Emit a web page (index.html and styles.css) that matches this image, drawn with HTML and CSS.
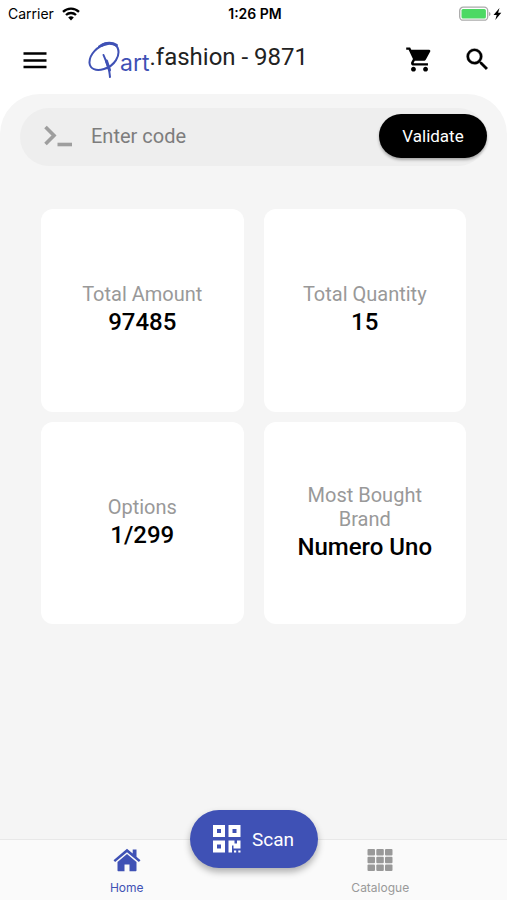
FILE: index.html
```html
<!DOCTYPE html>
<html lang="en">
  <head>
    <meta charset="UTF-8" />
    <meta name="viewport" content="width=device-width, initial-scale=1.0" />
    <title>Qart.fashion</title>
    <link rel="stylesheet" href="styles.css">
  </head>
  <body>
    <div class="status">
      <div class="carrier">
        <span>Carrier</span>
        <svg width="18" height="14" viewBox="0 0 18 14" fill="none" stroke="#000" stroke-width="2.3">
          <path d="M1 4.8a11.5 11.5 0 0 1 16 0" />
          <path d="M4 8a7.2 7.2 0 0 1 10 0" />
          <path d="M9 13.4l-2.8-2.9a4 4 0 0 1 5.6 0z" fill="#000" stroke="none" />
        </svg>
      </div>
      <span class="time">1:26 PM</span>
      <div class="battery">
        <svg width="43" height="16" viewBox="0 0 43 16">
          <rect x="0.7" y="1.2" width="28" height="13" rx="3.5" fill="#fff" stroke="#aaa" stroke-width="1.3" />
          <rect x="2.5" y="3" width="24.400" height="9.400" rx="1.5" fill="#4cd964" />
          <path d="M30 6c2 .6 2 3.400 0 4z" fill="#aaa" />
          <path d="M40.500 2l-6 7h3.200l-1.400 5 6-7.200h-3.200z" fill="#000" />
        </svg>
      </div>
    </div>

    <header class="header">
      <button class="icon-btn" aria-label="Menu">
        <svg width="24" height="24" viewBox="0 0 24 24" stroke="#000" stroke-width="2.600">
          <path d="M0.500 5.500h23M0.500 12.500h23M0.500 19h23" />
        </svg>
      </button>
      <h1 class="title">
        <svg class="mark" width="32" height="38" viewBox="0 0 32 38" fill="none" stroke="#3f51b5" stroke-linecap="round" role="img" aria-label="Q">
          <path d="M11 5.500C17 1 26.500 1 29.500 6.500c3.500 8-3 18.500-13.500 21.500C8 30.500 2 28 1.500 22 1 14 9 4.500 20 3" stroke-width="2" />
          <path d="M14 4.200c4-2.400 10-2.800 14.500 0" stroke-width="2.800" />
          <path d="M15.500 14c2 5 3.800 9 5 13s1 6 1.500 9" stroke-width="2" />
          <path d="M18.500 20l3 9" stroke-width="3" />
        </svg><span class="art">art</span><span class="name">.fashion - 9871</span>
      </h1>
      <div class="actions">
        <button class="icon-btn" aria-label="Cart">
          <svg width="29" height="29" viewBox="0 0 24 24">
            <path d="M7 18c-1.100 0-1.990.9-1.990 2S5.900 22 7 22s2-.9 2-2-.9-2-2-2zM1 2v2h2l3.600 7.590-1.350 2.450c-.16.280-.25.610-.25.960 0 1.100.9 2 2 2h12v-2H7.420c-.14 0-.25-.11-.25-.25l.03-.12.9-1.630h7.450c.75 0 1.410-.41 1.750-1.030l3.580-6.490A1 1 0 0 0 20 4H5.210l-.94-2H1zm16 16c-1.100 0-1.990.9-1.990 2s.89 2 1.990 2 2-.9 2-2-.9-2-2-2z" />
          </svg>
        </button>
        <button class="icon-btn" aria-label="Search">
          <svg width="29" height="29" viewBox="0 0 24 24" stroke="#000" stroke-width="0.300">
            <path d="M15.500 14h-.79l-.28-.27A6.471 6.471 0 0 0 16 9.500 6.500 6.500 0 1 0 9.500 16c1.610 0 3.090-.59 4.230-1.570l.27.280v.79l5 4.990L20.490 19l-4.990-5zm-6 0C7.010 14 5 11.990 5 9.500S7.010 5 9.500 5 14 7.010 14 9.500 11.990 14 9.500 14z" />
          </svg>
        </button>
      </div>
    </header>

    <main class="main">
      <form class="code-form">
        <label for="code" aria-label="Code">
          <svg width="30" height="22" viewBox="0 0 30 22" fill="none" stroke="#9e9e9e" stroke-width="3.600">
            <path d="M2.500 2l8.500 8.500L2.500 19" />
            <path d="M14.500 19.500H29" />
          </svg>
        </label>
        <input type="text" id="code" placeholder="Enter code" />
        <button type="button" class="validate">Validate</button>
      </form>

      <section class="cards">
        <div class="card">
          <h2>Total Amount</h2>
          <p>97485</p>
        </div>
        <div class="card">
          <h2>Total Quantity</h2>
          <p>15</p>
        </div>
        <div class="card">
          <h2>Options</h2>
          <p>1/299</p>
        </div>
        <div class="card">
          <h2>Most Bought Brand</h2>
          <p>Numero Uno</p>
        </div>
      </section>
    </main>

    <nav class="tabs">
      <a href="#" class="tab active">
        <svg width="28" height="24" viewBox="0 0 28 24" fill="#3f51b5">
          <path d="M14 .8L.5 12.200l1.600 1.900L14 4.200l11.900 9.900 1.600-1.900-4-3.400V1.600h-3.800v4z" />
          <path d="M14 6L4.500 14v8.200c0 .6.400 1 1 1h6v-6.600h5v6.600h6c.6 0 1-.4 1-1V14z" />
        </svg>
        <span>Home</span>
      </a>
      <a href="#" class="tab">
        <svg width="26" height="24" viewBox="0 0 26 24" fill="#999">
          <rect x="0.500" y="1" width="7.500" height="6.500" rx="1" />
          <rect x="9.300" y="1" width="7.500" height="6.500" rx="1" />
          <rect x="18" y="1" width="7.500" height="6.500" rx="1" />
          <rect x="0.500" y="8.800" width="7.500" height="6.500" rx="1" />
          <rect x="9.300" y="8.800" width="7.500" height="6.500" rx="1" />
          <rect x="18" y="8.800" width="7.500" height="6.500" rx="1" />
          <rect x="0.500" y="16.500" width="7.500" height="6.500" rx="1" />
          <rect x="9.300" y="16.500" width="7.500" height="6.500" rx="1" />
          <rect x="18" y="16.500" width="7.500" height="6.500" rx="1" />
        </svg>
        <span>Catalogue</span>
      </a>
      <button class="scan">
        <svg width="28" height="28" viewBox="0 0 28 28" fill="#fff">
          <path fill-rule="evenodd" d="M0 0h12v12H0zM4 4v4h4V4zM15.500 0h12v12h-12zM19.500 4v4h4V4zM0 15.500h12v12H0zM4 19.500v4h4v-4z" />
          <path d="M15.500 15.500h6v3h2.500v-3h3.500v8h-7v-3h-1.500v7h-3.500zM21 25.500h2.200v2H21zM25.300 25.500h2.200v2h-2.200z" />
        </svg>
        <span>Scan</span>
      </button>
    </nav>
  </body>
</html>
```
FILE: styles.css
```css
* {
  box-sizing: border-box;
}
body {
  margin: 0;
  min-height: 100vh;
  display: flex;
  flex-direction: column;
  background-color: white;
  color: black;
  font-family: Roboto, "Liberation Sans", sans-serif;
}
button {
  border: none;
  padding: 0;
  background: none;
  font-family: inherit;
  cursor: pointer;
}
svg {
  display: block;
}
.status {
  display: grid;
  grid-template-columns: 1fr auto 1fr;
  align-items: center;
  height: 27px;
  padding: 0 5px 0 8px;
  font-family: Inter, sans-serif;
  font-size: 14px;
}
.carrier {
  display: flex;
  align-items: center;
  gap: 8px;
}
.time {
  font-weight: 600;
}
.battery {
  justify-self: end;
}
.header {
  display: flex;
  align-items: center;
  height: 67px;
  padding: 0 15px 2px 23px;
}
.title {
  display: flex;
  align-items: center;
  flex: 1;
  margin: 0 0 0 41px;
  font-size: 24px;
  font-weight: 400;
  color: #222;
}
.art {
  align-self: flex-end;
  font-family: Inter, sans-serif;
  font-size: 23px;
  line-height: 32px;
  color: #3f51b5;
}
.name {
  padding-bottom: 6px;
}
.actions {
  display: flex;
  gap: 29px;
}
.main {
  flex: 1;
  padding: 14px 20px 20px;
  border-radius: 40px 40px 0 0;
  background-color: #f5f5f5;
}
.code-form {
  display: flex;
  align-items: center;
  height: 58px;
  padding: 0 0 2px 23px;
  border-radius: 29px;
  background-color: #eee;
}
.code-form input {
  flex: 1;
  min-width: 0;
  height: 100%;
  padding: 0 18px;
  border: none;
  outline: none;
  background: none;
  font-family: inherit;
  font-size: 20px;
}
.code-form input::placeholder {
  color: #7d7d7d;
}
.validate {
  width: 108px;
  height: 44px;
  border-radius: 22px;
  background-color: black;
  color: white;
  font-size: 17px;
  box-shadow: 0 2px 3px rgba(0, 0, 0, 0.3);
}
.cards {
  display: grid;
  grid-template-columns: 1fr 1fr;
  gap: 10px 20px;
  padding: 43px 21px 0;
}
.card {
  display: flex;
  flex-direction: column;
  align-items: center;
  justify-content: center;
  aspect-ratio: 1;
  padding: 0 30px;
  border-radius: 12px;
  background-color: white;
  text-align: center;
}
.card h2 {
  margin: 0;
  font-size: 20px;
  line-height: 24px;
  font-weight: 400;
  color: #999;
}
.card p {
  margin: 0;
  font-size: 24px;
  line-height: 32px;
  font-weight: 500;
}
.tabs {
  position: relative;
  display: flex;
  height: 61px;
  border-top: 1px solid #e8e8e8;
  background-color: #fafafa;
}
.tab {
  display: flex;
  flex: 1;
  flex-direction: column;
  align-items: center;
  gap: 8px;
  padding-top: 8px;
  font-family: Inter, sans-serif;
  font-size: 12px;
  line-height: 16px;
  color: #999;
  text-decoration: none;
}
.tab.active {
  color: #3f51b5;
}
/* floats over the top edge of the tab bar */
.scan {
  position: absolute;
  top: -30px;
  left: 50%;
  transform: translateX(-50%);
  display: flex;
  align-items: center;
  justify-content: center;
  gap: 11px;
  width: 128px;
  height: 58px;
  border-radius: 29px;
  background-color: #3f51b5;
  color: white;
  font-size: 19px;
  box-shadow: 0 4px 7px rgba(0, 0, 0, 0.3);
}
```
